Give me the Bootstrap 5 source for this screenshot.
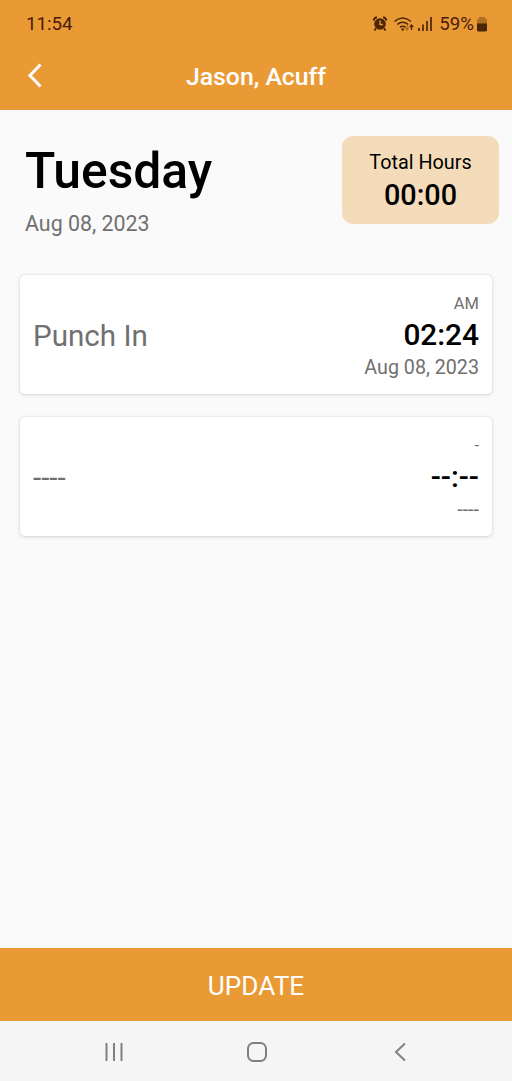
<!DOCTYPE html>
<html lang="en">
<head>
<meta charset="utf-8">
<meta name="viewport" content="width=device-width, initial-scale=1">
<title>Timesheet</title>
<link href="https://cdn.jsdelivr.net/npm/bootstrap@5.3.0/dist/css/bootstrap.min.css" rel="stylesheet">
<style>
body{font-family:Roboto,"Liberation Sans",sans-serif;background:#fafafa;color:#000;line-height:1}
.brand-bg,.brand-bg:hover{background:#ea9a35}
.medium{font-weight:500}
.status-row{height:48px;padding:0 24px 0 26px;color:#4a1a08;font-size:18.7px}
.status-row span{padding-top:1px}
.batt-text{margin:0 2px 0 1px}
.title-row{height:62px;padding-bottom:7px}
.title-row h1{font-size:24.8px;line-height:28px;padding-top:2px;margin-right:43px}
.back-btn{width:16px;height:26px;margin:-2px 0 0 27px}
.day-head{padding:26px 13px 0 25px;height:165px}
.day-name{font-size:49.8px;line-height:60px;margin-top:5px}
.day-date{font-size:21.4px;line-height:26px;margin-top:10px}
.muted{color:#707070}
.hours-box{width:157px;height:88px;border-radius:11px;background:#f4dcba;padding-top:14px}
.hours-label{font-size:19.8px;line-height:26px}
.hours-value{font-size:28.8px;line-height:34px;margin-top:2px}
.punch-list{gap:23px;margin:0 20px}
.punch{height:119px;border:0;border-radius:5px;padding:0 13px;box-shadow:0 0 2px rgba(0,0,0,.12),0 1px 4px rgba(0,0,0,.12)}
.punch-label{font-size:29.6px;line-height:36px;padding-top:3px}
.t-ampm{font-size:16.5px;line-height:20px;margin-top:4px}
.t-time{font-size:29.8px;line-height:36px;margin-top:3px}
.t-date{font-size:19.7px;line-height:24px;margin-top:3px}
.update-btn{height:73px;border:0;border-radius:0;color:#fff;font-size:26.2px;line-height:30px;padding:2px 0 0}
.nav-strip{height:60px;background:#f5f5f5;gap:121px;padding:2px 0 0 2px}
</style>
</head>
<body>
<div class="d-flex flex-column vh-100">
  <header class="brand-bg">
    <div class="status-row d-flex align-items-center justify-content-between">
      <span>11:54</span>
      <div class="d-flex align-items-center">
        <svg width="66" height="20" viewBox="0 0 66 20">
          <circle cx="8" cy="10" r="5.8" fill="#4a2508"/>
          <path d="M1.6 6.5a4 4 0 0 1 3.3-3.2M14.4 6.5a4 4 0 0 0-3.3-3.2M4 14.5l-1.7 1.8M12 14.5l1.7 1.8" stroke="#4a2508" stroke-width="1.9" fill="none"/>
          <path d="M8 6.5v4h3" stroke="#ea9a35" stroke-width="1.4" fill="none"/>
          <path d="M22.5 7.5q8.2-7 16.5 0M25.2 10.5q5.500-4.500 11 0M28 13.300q2.800-2.200 5.500 0" stroke="#4a2508" stroke-width="1.5" fill="none"/>
          <circle cx="30.7" cy="15.5" r="1.2" fill="#4a2508"/>
          <path d="M35 11v5m-1.7-2 1.7 2 1.7-2" stroke="#b06a20" stroke-width="1.2" fill="none"/>
          <path d="M39.5 16v-5m-1.7 2 1.7-2 1.7 2" stroke="#4a2508" stroke-width="1.3" fill="none"/>
          <path d="M47 17v-3M51 17v-6.500M55 17V7M59 17V3" stroke="#4a2508" stroke-width="1.7"/>
        </svg>
        <span class="batt-text">59%</span>
        <svg width="12" height="18" viewBox="0 0 12 18">
          <path d="M1 9V5.500Q1 3.500 3 3.500V2H9v1.500q2 0 2 2V9z" fill="#ad7021"/>
          <path d="M1 8.500h10V15q0 1.500-1.500 1.500h-7Q1 16.500 1 15z" fill="#4a2508"/>
        </svg>
      </div>
    </div>
    <div class="title-row d-flex align-items-center">
      <svg class="back-btn" viewBox="0 0 16 26"><path d="M13.500 2.500 3 13.500l10.500 11" stroke="#fff" stroke-width="3" fill="none"/></svg>
      <h1 class="medium flex-grow-1 text-center text-white mb-0">Jason, Acuff</h1>
    </div>
  </header>

  <main class="flex-grow-1">
    <section class="day-head d-flex justify-content-between align-items-start">
      <div>
        <div class="day-name medium">Tuesday</div>
        <div class="day-date muted">Aug 08, 2023</div>
      </div>
      <div class="hours-box text-center">
        <div class="hours-label">Total Hours</div>
        <div class="hours-value medium">00:00</div>
      </div>
    </section>
    <section class="punch-list d-flex flex-column">
      <div class="card punch flex-row align-items-center justify-content-between">
        <div class="punch-label muted">Punch In</div>
        <div class="text-end">
          <div class="t-ampm muted">AM</div>
          <div class="t-time medium">02:24</div>
          <div class="t-date muted">Aug 08, 2023</div>
        </div>
      </div>
      <div class="card punch flex-row align-items-center justify-content-between">
        <div class="punch-label muted">----</div>
        <div class="text-end">
          <div class="t-ampm muted">-</div>
          <div class="t-time medium">--:--</div>
          <div class="t-date muted">----</div>
        </div>
      </div>
    </section>
  </main>

  <button type="button" class="update-btn btn brand-bg w-100">UPDATE</button>
  <nav class="nav-strip d-flex align-items-center justify-content-center">
    <svg width="22" height="22" viewBox="0 0 22 22"><path d="M3.500 2v18M11 2v18M18.500 2v18" stroke="#808080" stroke-width="2"/></svg>
    <svg width="22" height="22" viewBox="0 0 22 22"><rect x="2" y="2" width="18" height="18" rx="5.5" fill="none" stroke="#808080" stroke-width="2"/></svg>
    <svg width="22" height="22" viewBox="0 0 22 22"><path d="M16 2.500 7 11l9 8.500" fill="none" stroke="#808080" stroke-width="2"/></svg>
  </nav>
</div>
<script src="https://cdn.jsdelivr.net/npm/bootstrap@5.3.0/dist/js/bootstrap.bundle.min.js"></script>
</body>
</html>
